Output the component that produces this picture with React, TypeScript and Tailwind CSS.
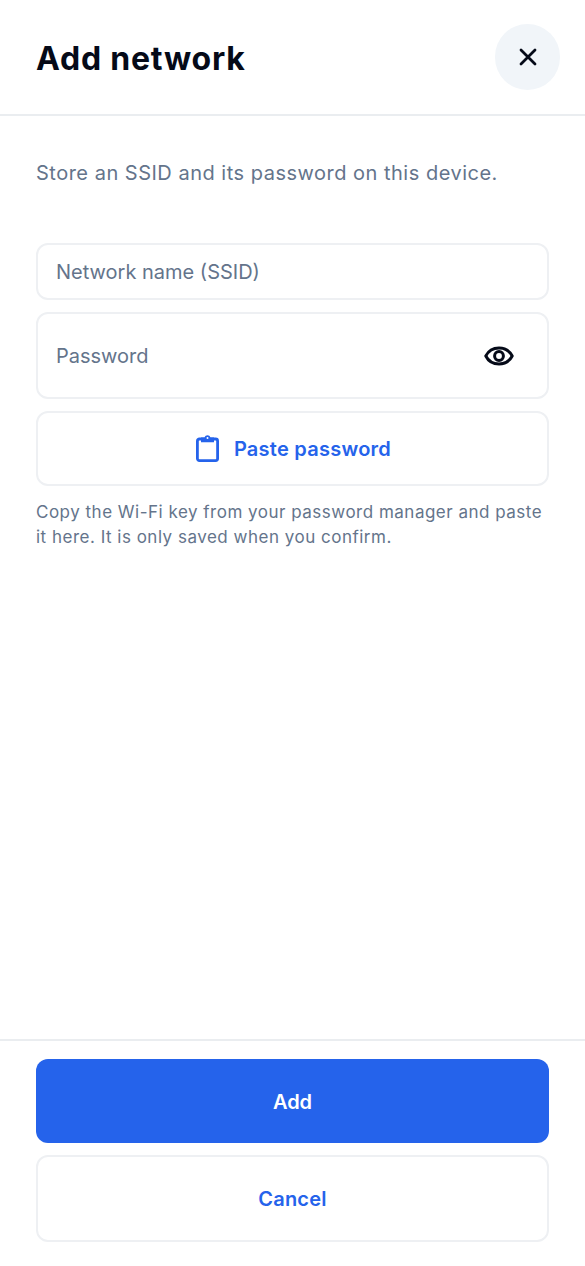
import React from "react";

function Eye() {
  return (
    <svg width="32" height="32" viewBox="0 0 32 32" fill="none" stroke="#050a18" strokeWidth="3">
      <path d="M2.800 16C5.600 10.400 10.400 8 16 8S26.400 10.400 29.200 16C26.400 21.600 21.600 24 16 24S5.600 21.600 2.800 16Z" strokeLinejoin="round" />
      <circle cx="16" cy="16" r="4.400" />
    </svg>
  );
}

function Clip() {
  return (
    <svg width="23" height="27" viewBox="0 0 23 27" fill="none">
      <rect x="1.400" y="4" width="20.200" height="21.600" rx="2" stroke="#2563eb" strokeWidth="2.800" />
      <path d="M5 2.600H8.600C9 1 10.200 0.200 11.500 0.200S14 1 14.400 2.600H18V7.200H5Z" fill="#2563eb" />
      <circle cx="11.500" cy="3" r="1" fill="#ffffff" />
    </svg>
  );
}

export default function App() {
  return (
    <div className="flex h-[1266px] w-[585px] flex-col bg-white font-['Inter',sans-serif]">
      <header className="flex h-[116px] shrink-0 items-center justify-between border-b-2 border-[#eaedf0] pl-9 pr-[25px]">
        <h1 className="mt-1 text-[32px] font-bold leading-10 tracking-[0.8px] text-[#050a18]">Add network</h1>
        <button className="flex h-[66px] w-[65px] items-center justify-center rounded-full bg-[#f1f5f9]">
          <svg width="18" height="18" viewBox="0 0 18 18" fill="none" stroke="#050a18" strokeWidth="2.800" strokeLinecap="round">
            <path d="M2 2L16 16M16 2L2 16" />
          </svg>
        </button>
      </header>

      <main className="flex flex-1 flex-col px-9">
        <p className="mt-[42px] text-[20px] leading-[30px] tracking-[0.5px] text-[#64748b]">
          Store an SSID and its password on this device.
        </p>
        <div className="mt-[55px] flex h-[57px] items-center rounded-xl border-2 border-[#eef0f3] px-[18px] text-[20px] text-[#64748b]">
          Network name (SSID)
        </div>
        <div className="mt-3 flex h-[87px] items-center justify-between rounded-xl border-2 border-[#eef0f3] pl-[18px] pr-[32px] text-[20px] text-[#64748b]">
          <span>Password</span>
          <Eye />
        </div>
        <button className="mt-3 flex h-[75px] items-center justify-center gap-[15px] rounded-xl border-2 border-[#eef0f3] pl-0.5 text-[20px] font-semibold tracking-[0.25px] text-[#2563eb]">
          <Clip />
          Paste password
        </button>
        <p className="mt-[14px] text-[17px] leading-[25px] tracking-[0.5px] text-[#64748b]">
          Copy the Wi-Fi key from your password manager and paste it here. It is only saved when you confirm.
        </p>
      </main>

      <footer className="flex shrink-0 flex-col gap-3 border-t-2 border-[#eaedf0] px-9 pb-6 pt-[18px]">
        <button className="h-[84px] rounded-xl bg-[#2563eb] pt-0.5 text-[20px] font-semibold text-white">Add</button>
        <button className="h-[87px] rounded-xl border-2 border-[#eef0f3] bg-white text-[20px] font-semibold tracking-[0.2px] text-[#2563eb]">Cancel</button>
      </footer>
    </div>
  );
}
